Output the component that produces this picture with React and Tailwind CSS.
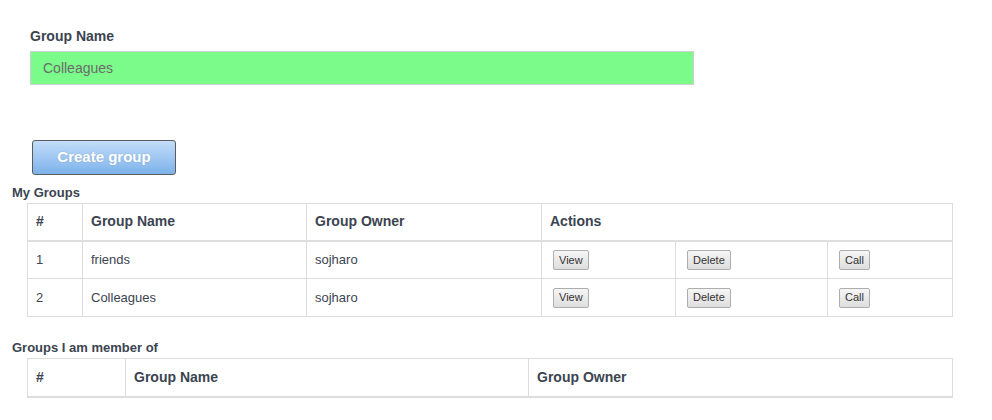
import React from 'react';

const groups = [
  { id: 1, name: 'friends', owner: 'sojharo' },
  { id: 2, name: 'Colleagues', owner: 'sojharo' },
];

const SmallButton = ({ children }) => (
  <button className="h-[20px] px-[5px] text-[11px] leading-none text-[#333] border border-[#adadad] rounded-[2px] bg-gradient-to-b from-[#f6f6f6] to-[#dedede]">
    {children}
  </button>
);

const App = () => (
  <div className="w-[992px] h-[420px] bg-white text-[#3b4451] font-['Liberation_Sans',Arial,sans-serif] overflow-hidden">
    {/* Create form */}
    <div className="pt-[28px] pl-[30px]">
      <label className="block text-[14px] font-bold leading-[16px]">Group Name</label>
      <div className="mt-[7px] w-[664px] h-[34px] flex items-center px-[12px] bg-[#7bfc8a] border border-[#cfcfcf] text-[14px] text-[#6b6b6b]">
        Colleagues
      </div>
      <button className="mt-[55px] ml-[2px] w-[144px] h-[35px] rounded-[3px] border border-[#5c5c5c] bg-gradient-to-b from-[#c2ddf8] to-[#7db2ea] text-white font-bold text-[15px] [text-shadow:0_0_2px_rgba(0,0,0,0.15)]">
        Create group
      </button>
    </div>

    {/* My groups */}
    <div className="pl-[12px] mt-[10px] text-[13px] font-bold leading-[15px]">My Groups</div>
    <table className="ml-[27px] mt-[3px] w-[926px] border-collapse border border-[#ddd] text-[13px]">
      <thead>
        <tr className="h-[37px] border-b-2 border-[#ddd] text-[14px]">
          <th className="w-[55px] border border-[#ddd] px-[8px] text-left font-bold">#</th>
          <th className="w-[224px] border border-[#ddd] px-[8px] text-left font-bold">Group Name</th>
          <th className="w-[235px] border border-[#ddd] px-[8px] text-left font-bold">Group Owner</th>
          <th colSpan={3} className="border border-[#ddd] px-[8px] text-left font-bold">Actions</th>
        </tr>
      </thead>
      <tbody>
        {groups.map((g) => (
          <tr key={g.id} className="h-[38px]">
            <td className="border border-[#ddd] px-[8px]">{g.id}</td>
            <td className="border border-[#ddd] px-[8px]">{g.name}</td>
            <td className="border border-[#ddd] px-[8px]">{g.owner}</td>
            <td className="w-[134px] border border-[#ddd] px-[11px]"><SmallButton>View</SmallButton></td>
            <td className="w-[152px] border border-[#ddd] px-[11px]"><SmallButton>Delete</SmallButton></td>
            <td className="border border-[#ddd] px-[11px]"><SmallButton>Call</SmallButton></td>
          </tr>
        ))}
      </tbody>
    </table>

    {/* Member groups */}
    <div className="pl-[12px] mt-[23px] text-[13px] font-bold leading-[15px]">Groups I am member of</div>
    <table className="ml-[27px] mt-[3px] w-[926px] border-collapse border border-[#ddd] text-[14px]">
      <thead>
        <tr className="h-[38px] border-b-2 border-[#ddd]">
          <th className="w-[98px] border border-[#ddd] px-[8px] text-left font-bold">#</th>
          <th className="w-[403px] border border-[#ddd] px-[8px] text-left font-bold">Group Name</th>
          <th className="border border-[#ddd] px-[8px] text-left font-bold">Group Owner</th>
        </tr>
      </thead>
    </table>
  </div>
);

export default App;
